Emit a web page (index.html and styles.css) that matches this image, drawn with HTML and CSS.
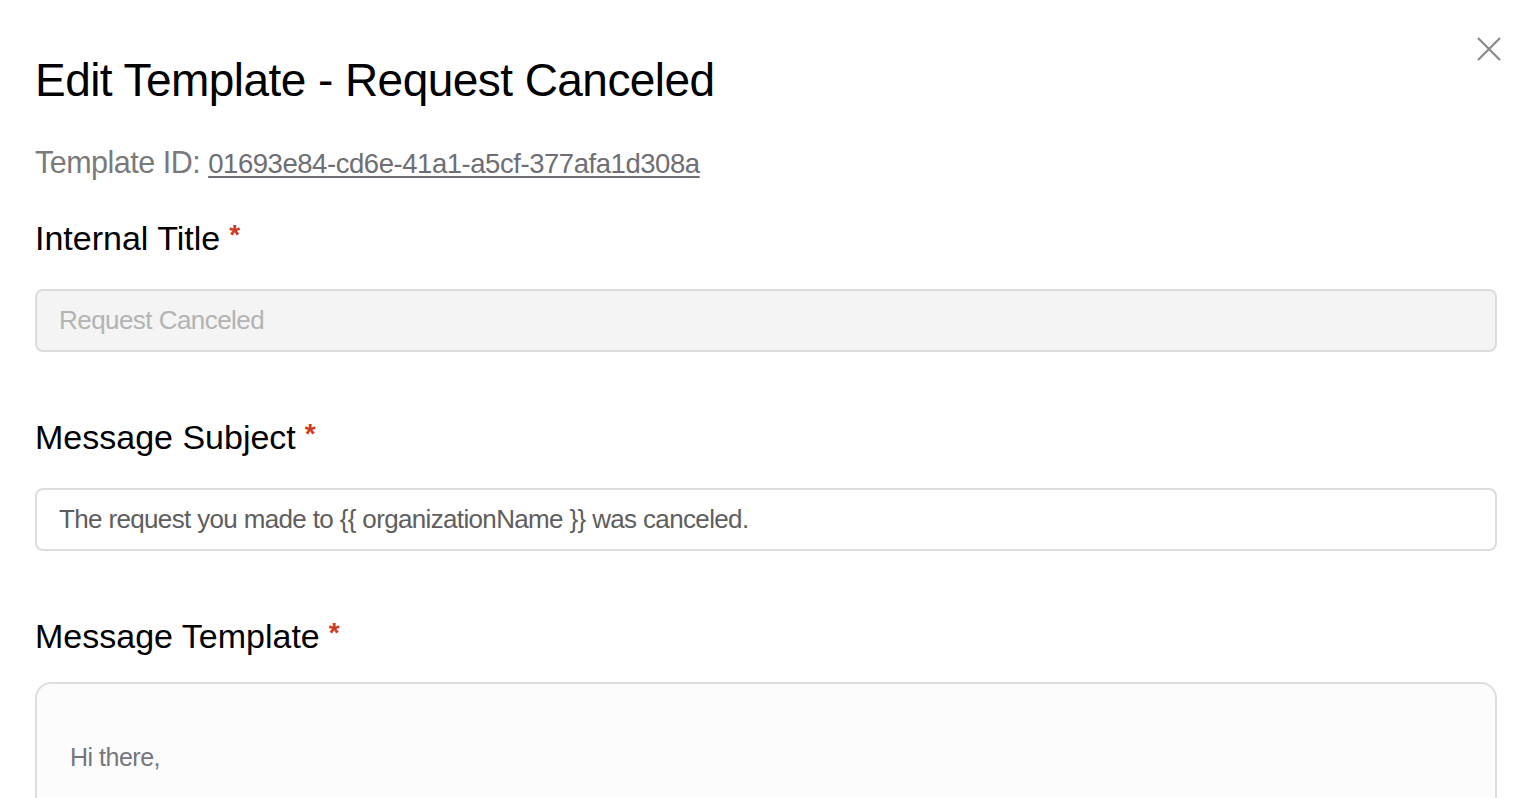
FILE: index.html
```html
<!DOCTYPE html>
<html lang="en">
  <head>
    <meta charset="UTF-8" />
    <meta name="viewport" content="width=device-width, initial-scale=1.0" />
    <title>Edit Template</title>
    <link rel="stylesheet" href="styles.css">
  </head>
  <body>
    <div class="modal">
      <button class="close" aria-label="Close">
        <svg width="26" height="26" viewBox="0 0 26 26">
          <path d="M2 2 L24 24 M24 2 L2 24" stroke="#8a8a8a" stroke-width="2.2" fill="none" />
        </svg>
      </button>
      <h1 class="title">Edit Template - Request Canceled</h1>
      <p class="templateId">
        Template ID: <a href="#">01693e84-cd6e-41a1-a5cf-377afa1d308a</a>
      </p>

      <div class="field">
        <label class="label">Internal Title<span class="req">*</span></label>
        <div class="input disabled">Request Canceled</div>
      </div>

      <div class="field">
        <label class="label">Message Subject<span class="req">*</span></label>
        <div class="input">The request you made to {{ organizationName }} was canceled.</div>
      </div>

      <div class="field">
        <label class="label">Message Template<span class="req">*</span></label>
        <div class="editor">
          <p>Hi there,</p>
        </div>
      </div>
    </div>
  </body>
</html>
```

FILE: styles.css
```css
body {
  margin: 0;
  padding: 0;
  background: #ffffff;
  font-family: "Liberation Sans", Arial, sans-serif;
  color: #000;
  overflow: hidden;
}
.modal {
  position: relative;
  padding: 52px 31px 0 35px;
}
.close {
  position: absolute;
  top: 36px;
  right: 26px;
  border: none;
  background: none;
  padding: 0;
  cursor: pointer;
}
.title {
  margin: 0;
  font-size: 46px;
  font-weight: 400;
  letter-spacing: -0.55px;
  line-height: 56px;
}
.templateId {
  margin: 37px 0 0 0;
  font-size: 30.5px;
  line-height: 34px;
  letter-spacing: -0.5px;
  color: #7a7a7a;
}
.templateId a {
  color: #6e6e74;
  text-decoration: underline;
  text-underline-offset: 3px;
  font-size: 27.5px;
  letter-spacing: -0.45px;
}
.field {
  margin-top: 34px;
}
.field + .field {
  margin-top: 62px;
}
.label {
  display: block;
  font-size: 34px;
  line-height: 40px;
  letter-spacing: 0;
}
.req {
  margin-left: 9px;
  color: #cf3a22;
  font-size: 28px;
  font-weight: 700;
  vertical-align: 6px;
}
.input {
  box-sizing: border-box;
  margin-top: 31px;
  height: 63px;
  border: 2px solid #dcdcdc;
  border-radius: 8px;
  padding: 0 22px;
  display: flex;
  align-items: center;
  font-size: 26px;
  letter-spacing: -0.65px;
  color: #5e5e5e;
}
.input.disabled {
  background: #f4f4f4;
  color: #b3b3b3;
  letter-spacing: -0.55px;
}
.editor {
  margin-top: 26px;
  height: 200px;
  border: 2px solid #dedede;
  border-radius: 16px;
  background: #fcfcfc;
  padding: 0 33px;
}
.editor p {
  margin: 59px 0 0 0;
  font-size: 25px;
  letter-spacing: -0.5px;
  color: #76767c;
}
```
